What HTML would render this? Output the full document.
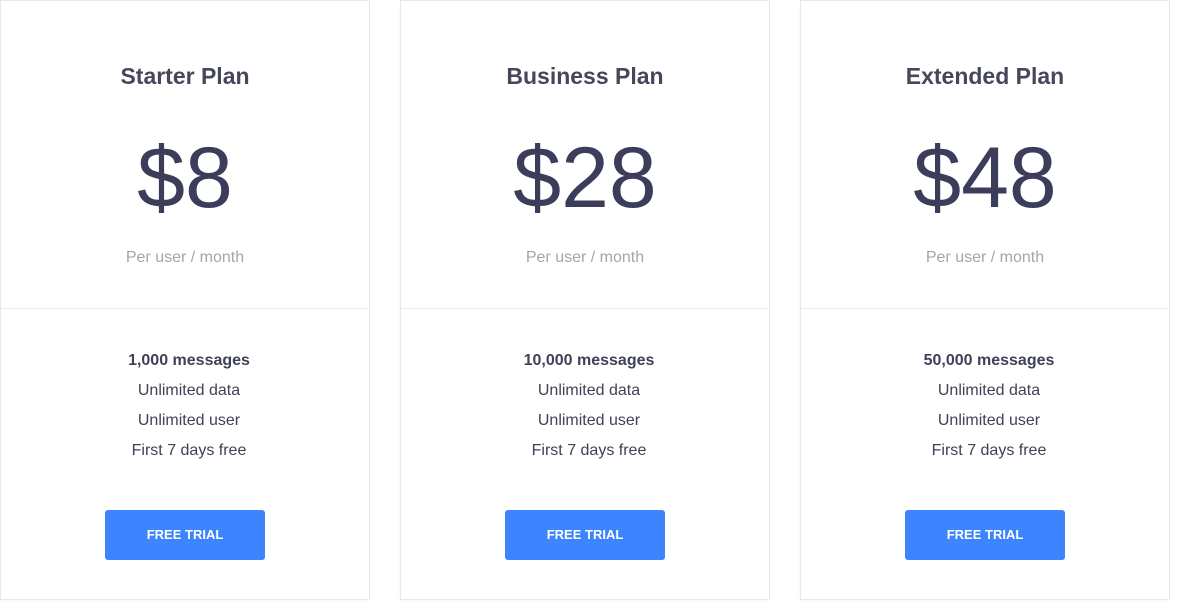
<!DOCTYPE html>
<html><head><style>
body{margin:0;width:1190px;height:616px;background:#fff;font-family:"Liberation Sans",sans-serif;position:relative;overflow:hidden}
.card{position:absolute;top:0;width:368px;height:598px;border:1px solid #e8e8ec;background:#fff;box-shadow:0 1px 3px rgba(0,0,0,0.03)}
.div{position:absolute;left:0;right:0;top:307px;height:1px;background:#ececf0}
.t{position:absolute;left:0;right:0;top:62px;text-align:center;font-size:23px;font-weight:bold;color:#45475a}
.p{position:absolute;left:0;right:0;top:127px;text-align:center;font-size:86px;color:#3c3d5a;line-height:100px}
.s{position:absolute;left:0;right:0;top:248px;text-align:center;font-size:16px;color:#a4a4ac}
.f{position:absolute;left:8px;right:0;top:345px;text-align:center;font-size:16px;color:#3f4256;line-height:30px}
.f b{color:#3f4256}
.btn{position:absolute;left:104px;top:509px;width:160px;height:50px;background:#3d85fe;border-radius:3px;color:#fff;font-size:13px;font-weight:bold;text-align:center;line-height:50px}
</style></head><body>
<div class="card" style="left:0"><div class="t">Starter Plan</div><div class="p">$8</div><div class="s">Per user / month</div><div class="div"></div><div class="f"><b>1,000 messages</b><br>Unlimited data<br>Unlimited user<br>First 7 days free</div><div class="btn">FREE TRIAL</div></div>
<div class="card" style="left:400px"><div class="t">Business Plan</div><div class="p">$28</div><div class="s">Per user / month</div><div class="div"></div><div class="f"><b>10,000 messages</b><br>Unlimited data<br>Unlimited user<br>First 7 days free</div><div class="btn">FREE TRIAL</div></div>
<div class="card" style="left:800px"><div class="t">Extended Plan</div><div class="p">$48</div><div class="s">Per user / month</div><div class="div"></div><div class="f"><b>50,000 messages</b><br>Unlimited data<br>Unlimited user<br>First 7 days free</div><div class="btn">FREE TRIAL</div></div>
</body></html>
